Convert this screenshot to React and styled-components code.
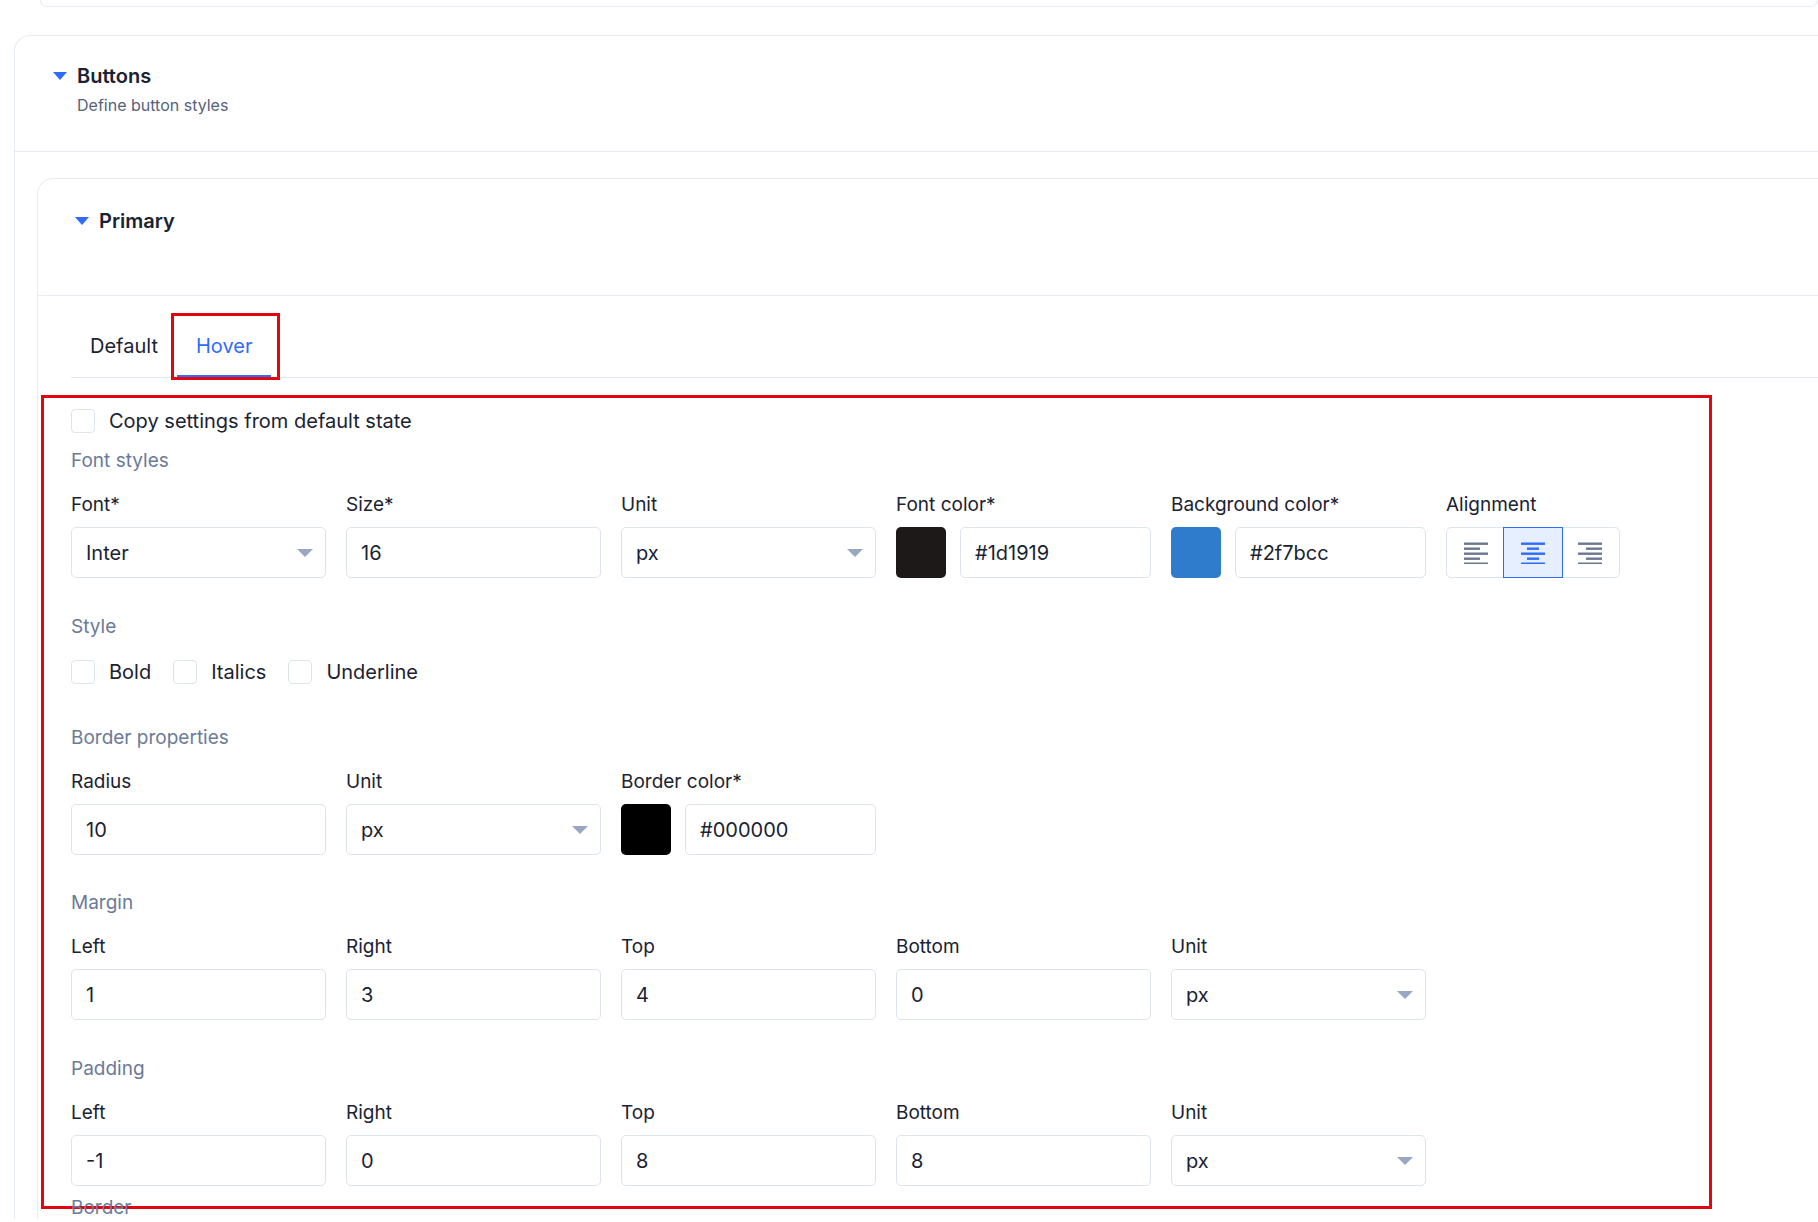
import React from 'react';
import styled, { createGlobalStyle } from 'styled-components';

const Global = createGlobalStyle`
  body { margin: 0; background: #fff; font-family: 'Inter', 'Lato', sans-serif; color: #1a2233; overflow: hidden; }
`;

const Page = styled.div`
  width: 1818px;
  height: 1222px;
  overflow: hidden;
`;

const TopCardEdge = styled.div`
  height: 6px;
  margin-left: 40px;
  border: 1px solid #e6ebf4;
  border-top: none;
  border-radius: 0 0 16px 16px;
`;

const Card = styled.div`
  margin: ${p => p.$top}px -40px 0 ${p => p.$left}px;
  border: 1px solid #e6ebf4;
  border-radius: 16px 0 0 0;
  border-right: none;
  border-bottom: none;
`;

const CardHeader = styled.div`
  padding: ${p => p.$pt}px 0 ${p => p.$pb}px ${p => p.$pl}px;
  border-bottom: 1px solid #e6ebf4;
`;

const Title = styled.div`
  display: flex;
  align-items: center;
  gap: 10px;
  font-size: 20px;
  font-weight: 600;
  line-height: 26px;
  color: #1a2233;
`;

const Caret = styled.span`
  width: 0;
  height: 0;
  border-left: 7px solid transparent;
  border-right: 7px solid transparent;
  border-top: 8px solid #2f6bff;
`;

const Subtitle = styled.div`
  margin: 5px 0 0 ${p => p.$indent}px;
  font-size: 16px;
  line-height: 22px;
  color: #56627a;
`;

const CardBody = styled.div`
  padding: 0 0 0 ${p => p.$pl}px;
`;

const Tabs = styled.div`
  display: flex;
  margin-top: 20px;
  border-bottom: 1px solid #e2e7f0;
`;

const Tab = styled.div`
  position: relative;
  padding: 19px 19px 18px;
  font-size: 20px;
  line-height: 22px;
  color: ${p => (p.$active ? '#2f6bff' : '#1a2233')};
  border-bottom: 3px solid ${p => (p.$active ? '#2f6bff' : 'transparent')};
  margin-bottom: -1px;
`;

const Highlight = styled.span`
  position: absolute;
  inset: -3px -9px -5px -6px;
  border: 3px solid #e3050f;
  pointer-events: none;
`;

const Panel = styled.div`
  margin: 17px 0 0 -30px;
  width: 1638px;
  padding: 11px 0 20px 27px;
  border: 3px solid #e3050f;
`;

const CheckRow = styled.div`
  display: flex;
  align-items: center;
  margin-top: ${p => p.$mt || 0}px;
`;

const CheckItem = styled.span`
  display: flex;
  align-items: center;
  gap: 14px;
  margin-right: ${p => p.$mr || 0}px;
  font-size: 20px;
  line-height: 24px;
`;

const Box = styled.span`
  width: 22px;
  height: 22px;
  border: 1px solid #dde3ef;
  border-radius: 4px;
  background: #fff;
`;

const SectionTitle = styled.div`
  margin-top: ${p => p.$mt}px;
  font-size: 19px;
  line-height: 22px;
  color: #6b7a99;
`;

const Grid = styled.div`
  display: grid;
  grid-template-columns: repeat(${p => p.$cols}, 255px);
  column-gap: 20px;
  margin-top: 22px;
`;

const Field = styled.div`
  display: flex;
  flex-direction: column;
  gap: 11px;
`;

const Label = styled.div`
  font-size: 19px;
  line-height: 22px;
  color: #1a2233;
`;

const Input = styled.div`
  position: relative;
  box-sizing: border-box;
  height: 51px;
  flex: ${p => (p.$grow ? 1 : 'none')};
  display: flex;
  align-items: center;
  padding: 0 14px;
  border: 1px solid #dde3ef;
  border-radius: 5px;
  font-size: 20px;
  color: #1a2233;
  background: #fff;
`;

const SelectCaret = styled.span`
  position: absolute;
  right: 12px;
  top: 21px;
  border-left: 8px solid transparent;
  border-right: 8px solid transparent;
  border-top: 8px solid #9aa7c2;
`;

const ColorRow = styled.div`
  display: flex;
  gap: 14px;
`;

const Swatch = styled.div`
  width: 50px;
  height: 51px;
  border-radius: 5px;
  background: ${p => p.$color};
  flex: none;
`;

const AlignGroup = styled.div`
  display: flex;
  width: 174px;
  height: 51px;
  box-sizing: border-box;
  border: 1px solid #dde3ef;
  border-radius: 5px;
`;

const AlignBtn = styled.div`
  flex: 1;
  display: flex;
  align-items: center;
  justify-content: center;
  background: ${p => (p.$active ? '#e6efff' : 'transparent')};
  outline: ${p => (p.$active ? '1px solid #2f6bff' : 'none')};
  color: ${p => (p.$active ? '#2f6bff' : '#6b7790')};
`;

const Below = styled.div`
  margin-top: -12px;
  font-size: 19px;
  line-height: 22px;
  color: #6b7a99;
`;

const AlignIcon = ({ kind }) => {
  const widths = [24, kind === 'center' ? 12 : 16, 24, kind === 'center' ? 12 : 16, 24];
  return (
    <svg width="24" height="22" viewBox="0 0 24 22">
      {widths.map((w, i) => {
        const x = kind === 'left' ? 0 : kind === 'center' ? (24 - w) / 2 : 24 - w;
        return <rect key={i} x={x} y={i * 5 + 0.5} width={w} height="2.4" fill="currentColor" />;
      })}
    </svg>
  );
};

const Select = ({ value }) => (
  <Input>{value}<SelectCaret /></Input>
);

export default function App() {
  return (
    <Page>
      <Global />
      <TopCardEdge />
      <Card $top={28} $left={14}>
        <CardHeader $pt={27} $pb={35} $pl={38}>
          <Title><Caret />Buttons</Title>
          <Subtitle $indent={24}>Define button styles</Subtitle>
        </CardHeader>
        <CardBody $pl={22}>
          <Card $top={26} $left={0}>
            <CardHeader $pt={29} $pb={61} $pl={37}>
              <Title><Caret />Primary</Title>
            </CardHeader>
            <CardBody $pl={33}>
              <Tabs>
                <Tab>Default</Tab>
                <Tab $active>Hover<Highlight /></Tab>
              </Tabs>
              <Panel>
                <CheckRow>
                  <CheckItem><Box />Copy settings from default state</CheckItem>
                </CheckRow>

                <SectionTitle $mt={17}>Font styles</SectionTitle>
                <Grid $cols={6}>
                  <Field><Label>Font*</Label><Select value="Inter" /></Field>
                  <Field><Label>Size*</Label><Input>16</Input></Field>
                  <Field><Label>Unit</Label><Select value="px" /></Field>
                  <Field><Label>Font color*</Label>
                    <ColorRow><Swatch $color="#1d1919" /><Input $grow>#1d1919</Input></ColorRow>
                  </Field>
                  <Field><Label>Background color*</Label>
                    <ColorRow><Swatch $color="#2f7bcc" /><Input $grow>#2f7bcc</Input></ColorRow>
                  </Field>
                  <Field><Label>Alignment</Label>
                    <AlignGroup>
                      <AlignBtn><AlignIcon kind="left" /></AlignBtn>
                      <AlignBtn $active><AlignIcon kind="center" /></AlignBtn>
                      <AlignBtn><AlignIcon kind="right" /></AlignBtn>
                    </AlignGroup>
                  </Field>
                </Grid>

                <SectionTitle $mt={38}>Style</SectionTitle>
                <CheckRow $mt={22}>
                  <CheckItem $mr={22}><Box />Bold</CheckItem>
                  <CheckItem $mr={22}><Box />Italics</CheckItem>
                  <CheckItem><Box />Underline</CheckItem>
                </CheckRow>

                <SectionTitle $mt={43}>Border properties</SectionTitle>
                <Grid $cols={3}>
                  <Field><Label>Radius</Label><Input>10</Input></Field>
                  <Field><Label>Unit</Label><Select value="px" /></Field>
                  <Field><Label>Border color*</Label>
                    <ColorRow><Swatch $color="#000000" /><Input $grow>#000000</Input></ColorRow>
                  </Field>
                </Grid>

                <SectionTitle $mt={37}>Margin</SectionTitle>
                <Grid $cols={5}>
                  <Field><Label>Left</Label><Input>1</Input></Field>
                  <Field><Label>Right</Label><Input>3</Input></Field>
                  <Field><Label>Top</Label><Input>4</Input></Field>
                  <Field><Label>Bottom</Label><Input>0</Input></Field>
                  <Field><Label>Unit</Label><Select value="px" /></Field>
                </Grid>

                <SectionTitle $mt={38}>Padding</SectionTitle>
                <Grid $cols={5}>
                  <Field><Label>Left</Label><Input>-1</Input></Field>
                  <Field><Label>Right</Label><Input>0</Input></Field>
                  <Field><Label>Top</Label><Input>8</Input></Field>
                  <Field><Label>Bottom</Label><Input>8</Input></Field>
                  <Field><Label>Unit</Label><Select value="px" /></Field>
                </Grid>
              </Panel>
              <Below>Border</Below>
            </CardBody>
          </Card>
        </CardBody>
      </Card>
    </Page>
  );
}
